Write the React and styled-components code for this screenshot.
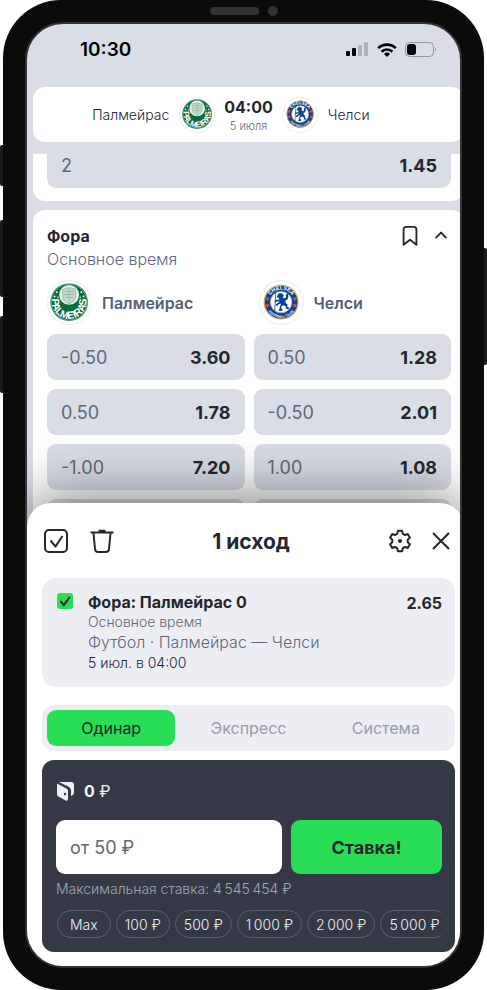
import React, { useId, useState } from "react";
import styled, { createGlobalStyle } from "styled-components";

const c = {
  bg: "#d9dde6",
  text: "#23272f",
  muted: "#5f687c",
  soft: "#949cb0",
  panel: "#edeef3",
  dark: "#343945",
  green: "#29dd55",
};

const GlobalStyle = createGlobalStyle`
  *, *::before, *::after { box-sizing: border-box; }
  body { margin: 0; background: #fff; font-family: Inter, "Noto Sans", sans-serif; color: ${c.text}; }
  button, input { font: inherit; color: inherit; }
  h1, h2, p { margin: 0; }
`;

const Device = styled.div`
  display: grid;
  grid-template-columns: 3px minmax(0, 1fr) 3px;
  min-height: 100vh;
`;

const Rail = styled.div`
  display: flex;
  flex-direction: column;
  padding-top: ${(p) => p.$top}px;
`;

const SideKey = styled.span`
  height: ${(p) => p.$height}px;
  margin-bottom: ${(p) => p.$after || 0}px;
  background: #1b1b1b;
  border-radius: ${(p) => (p.$right ? "0 2px 2px 0" : "2px 0 0 2px")};
`;

const Body = styled.div`
  display: flex;
  flex-direction: column;
  padding: 0 22px 22px;
  background: #0b0b0b;
  border-radius: 58px;
`;

const Notch = styled.div`
  display: flex;
  align-items: center;
  justify-content: center;
  gap: 9px;
  height: 22px;
`;

const Speaker = styled.span`
  width: 49px;
  height: 8px;
  border-radius: 4px;
  background: #333;
`;

const Camera = styled.span`
  width: 10px;
  height: 10px;
  border-radius: 50%;
  background: #333;
`;

const Screen = styled.main`
  display: flex;
  flex: 1;
  flex-direction: column;
  overflow: hidden;
  border: 2px solid #333;
  border-radius: 38px;
  background: ${c.bg};
`;

const StatusBar = styled.div`
  display: flex;
  align-items: center;
  justify-content: space-between;
  height: 51px;
  margin-bottom: 12px;
  padding: 0 23px 0 53px;
`;

const Clock = styled.time`
  font-size: 19px;
  font-weight: 600;
  color: #000;
`;

const StatusIcons = styled.div`
  display: flex;
  align-items: center;
  gap: 8px;
`;

const Card = styled.section`
  flex: none;
  margin: 0 -4px 0 6px;
  padding: 15px 13px 14px 14px;
  border-radius: 12px;
  background: #fff;
`;

const MatchCard = styled(Card)`
  display: grid;
  grid-template-columns: 1fr auto 1fr;
  align-items: center;
  height: 55px;
  padding: 0;
  font-size: 14px;
  font-weight: 300;
`;

const Home = styled.div`
  display: flex;
  align-items: center;
  justify-content: flex-end;
  gap: 10px;
`;

const Away = styled(Home)`
  justify-content: flex-start;
`;

const Kickoff = styled.div`
  display: flex;
  flex-direction: column;
  align-items: center;
  margin: 0 9px;
`;

const KickoffTime = styled.strong`
  font-size: 16px;
  font-weight: 700;
  line-height: 22px;
`;

const KickoffDate = styled.span`
  font-size: 11px;
  line-height: 16px;
  color: ${c.muted};
`;

const Badge = styled.span`
  display: flex;
  flex: none;
  align-items: center;
  justify-content: center;
  width: ${(p) => p.$size}px;
  height: ${(p) => p.$size}px;
  border: 1px solid #ececf0;
  border-radius: 50%;
  background: #fff;

  svg { width: 89%; height: 89%; }
`;

const List = styled.div`
  display: flex;
  flex: 1 1 300px;
  flex-direction: column;
  gap: 9px;
  min-height: 0;
  margin-top: 12px;
  overflow: hidden;
`;

const PartialCard = styled(Card)`
  margin-top: -12px;
  padding-top: 0;
  padding-bottom: 13px;
`;

const Odd = styled.button`
  display: flex;
  align-items: center;
  justify-content: space-between;
  width: 100%;
  height: 46px;
  padding: 0 14px;
  border: 0;
  border-radius: 9px;
  background: ${c.bg};
  color: ${c.muted};
  font-size: 18px;
  cursor: pointer;

  strong { font-weight: 700; color: ${c.text}; }
`;

const PendingOdd = styled.div`
  height: 46px;
  border-radius: 9px;
  background: ${c.bg};
`;

const MarketHead = styled.header`
  display: flex;
  align-items: flex-start;
  justify-content: space-between;
`;

const MarketTitle = styled.h2`
  font-size: 16px;
  font-weight: 700;
  line-height: 23px;
`;

const MarketNote = styled.p`
  font-size: 16px;
  font-weight: 300;
  line-height: 23px;
  color: ${c.muted};
`;

const Actions = styled.div`
  display: flex;
  align-items: center;
  gap: ${(p) => p.$gap}px;
`;

const IconButton = styled.button`
  display: flex;
  align-items: center;
  justify-content: center;
  width: ${(p) => p.$size}px;
  height: ${(p) => p.$size}px;
  padding: 0;
  border: 0;
  background: none;
  cursor: pointer;

  svg { display: block; flex: none; }
`;

const OddsGrid = styled.div`
  display: grid;
  grid-template-columns: 1fr 1fr;
  gap: 9px;
  margin-top: 9px;
`;

const Team = styled.div`
  display: flex;
  align-items: center;
  gap: 10px;
  font-size: 16px;
  font-weight: 600;
  color: #556074;
  padding-left: ${(p) => p.$inset || 0}px;
`;

const Sheet = styled.section`
  position: relative;
  display: flex;
  flex: none;
  flex-direction: column;
  margin: -24px -4px 0 0;
  padding: 0 9px 14px 15px;
  border-radius: 24px 24px 0 0;
  background: #fff;
  box-shadow: 0 0 64px rgba(0, 0, 0, 0.6);
`;

const SheetHead = styled.header`
  display: grid;
  grid-template-columns: auto 1fr auto;
  align-items: center;
  height: 75px;
  padding-top: 1px;
`;

const SheetTitle = styled.h1`
  font-size: 21px;
  font-weight: 700;
  text-align: center;
`;

const Bet = styled.article`
  display: grid;
  grid-template-columns: 16px 1fr auto;
  column-gap: 15px;
  padding: 14px 13px 14px 15px;
  border-radius: 14px;
  background: ${c.panel};
`;

const Tick = styled.input`
  appearance: none;
  width: 16px;
  height: 16px;
  margin: 1px 0 0;
  border-radius: 3px;
  background: #fff;
  cursor: pointer;

  &:checked {
    background: ${c.green} url("data:image/svg+xml,%3Csvg xmlns='http://www.w3.org/2000/svg' viewBox='0 0 16 16'%3E%3Cpath d='M3.5 8.2l3.3 4L12.8 4' fill='none' stroke='%2323272f' stroke-width='2'/%3E%3C/svg%3E") center / contain;
  }
`;

const BetText = styled.label`
  display: flex;
  flex-direction: column;
`;

const BetTitle = styled.strong`
  font-size: 16px;
  font-weight: 700;
  line-height: 20px;
`;

const BetLine = styled.span`
  font-size: ${(p) => p.$size}px;
  font-weight: 300;
  line-height: ${(p) => (p.$size === 16 ? 21 : 20)}px;
  color: ${(p) => (p.$dark ? c.text : c.muted)};
`;

const BetOdd = styled.strong`
  font-size: 16px;
  font-weight: 700;
  line-height: 22px;
`;

const Tabs = styled.div`
  display: grid;
  grid-template-columns: repeat(3, 1fr);
  gap: 9px;
  margin-top: 18px;
  padding: 5px;
  border-radius: 12px;
  background: ${c.panel};
`;

const Tab = styled.button`
  height: 36px;
  padding: 0;
  border: 0;
  border-radius: 9px;
  background: ${(p) => (p.$active ? c.green : "transparent")};
  color: ${(p) => (p.$active ? c.text : c.soft)};
  font-size: 16px;
  cursor: pointer;
`;

const Stake = styled.form`
  display: flex;
  flex-direction: column;
  margin-top: 9px;
  padding: 14px 13px 14px 14px;
  border-radius: 12px;
  background: ${c.dark};
`;

const Balance = styled.div`
  display: flex;
  align-items: center;
  gap: 10px;
  height: 34px;
  margin-bottom: 12px;
  font-size: 16px;
  color: #f0f1f5;
`;

const StakeRow = styled.div`
  display: grid;
  grid-template-columns: 3fr 2fr;
  gap: 9px;
`;

const Amount = styled.input`
  width: 100%;
  min-width: 0;
  height: 54px;
  padding: 0 14px;
  border: 0;
  border-radius: 9px;
  background: #fff;
  font-size: 18px;

  &::placeholder { color: ${c.muted}; opacity: 1; }
`;

const Submit = styled.button`
  height: 54px;
  padding: 0;
  border: 0;
  border-radius: 9px;
  background: ${c.green};
  font-size: 18px;
  font-weight: 700;
  cursor: pointer;
`;

const Limit = styled.p`
  margin-top: 4px;
  font-size: 14px;
  font-weight: 300;
  line-height: 22px;
  color: #a0a7b9;
`;

const Chips = styled.div`
  display: flex;
  gap: 5px;
  margin-top: 10px;
  padding-left: 1px;
  overflow: hidden;
`;

const Chip = styled.button`
  flex: none;
  height: 28px;
  padding: 0 ${(p) => (p.$wide ? 12 : 8)}px;
  border: 1px solid #555d72;
  border-radius: 14px;
  background: none;
  color: #f0f1f5;
  font-size: 14px;
  font-weight: 300;
  white-space: nowrap;
  cursor: pointer;
`;

function PalmeirasCrest() {
  const id = useId();
  return (
    <svg viewBox="0 0 100 100" aria-hidden="true">
      <circle cx="50" cy="50" r="49" fill="#0b6b41" />
      <circle cx="50" cy="50" r="47" fill="none" stroke="#fff" strokeWidth="1" />
      <circle cx="50" cy="31" r="26" fill="#e4efe8" />
      <path d="M33 17q17-9 34 0v16q0 14-17 22-17-8-17-22z" fill="#c3dccd" stroke="#6fa98a" strokeWidth="1.5" />
      <path d="M38 22h24M37 30h26M39 38h22M50 16v36" stroke="#85b79b" strokeWidth="2" />
      <g fill="#fff">
        <circle cx="18" cy="24" r="2.4" /><circle cx="12" cy="35" r="2.4" /><circle cx="21" cy="37" r="2" />
        <circle cx="82" cy="24" r="2.4" /><circle cx="88" cy="35" r="2.4" /><circle cx="79" cy="37" r="2" />
      </g>
      <path id={id} d="M9 30A45 45 0 1 0 91 30" fill="none" />
      <text fill="#fff" fontFamily="Liberation Sans" fontWeight="700" fontSize="27" textAnchor="middle">
        <textPath href={`#${id}`} startOffset="50%">PALMEIRAS</textPath>
      </text>
    </svg>
  );
}

function ChelseaCrest() {
  const top = useId();
  const bottom = useId();
  return (
    <svg viewBox="0 0 100 100" aria-hidden="true">
      <circle cx="50" cy="50" r="44" fill="#0a4595" stroke="#c9a860" strokeWidth="3" />
      <circle cx="50" cy="50" r="28" fill="#fff" stroke="#c9a860" strokeWidth="2" />
      <path id={top} d="M17 50A33 33 0 0 1 83 50" fill="none" />
      <path id={bottom} d="M9 50A41 41 0 0 0 91 50" fill="none" />
      <g fill="#fff" fontFamily="Liberation Sans" fontWeight="700" textAnchor="middle">
        <text fontSize="14"><textPath href={`#${top}`} startOffset="50%">CHELSEA</textPath></text>
        <text fontSize="9"><textPath href={`#${bottom}`} startOffset="50%">FOOTBALL CLUB</textPath></text>
      </g>
      <g fill="#e5424d">
        <circle cx="14" cy="41" r="4.5" /><circle cx="14" cy="59" r="4.5" />
        <circle cx="86" cy="41" r="4.5" /><circle cx="86" cy="59" r="4.5" />
      </g>
      <path
        d="M42 29l5-3 7 2 3 5-3 4 5 3 4-2-1-6 4-5 5 1-3 4 1 5-3 7-5 2 1 6 5 4-1 6 5 3-1 3h-8l1-6-7-4-5 2-1 6 4 4-2 3h-8l1-4 2-8 3-7-6 1-4 5-5-2 5-6 7-3-7-1-5 3-3-4 6-3 7 0-2-6-5-1z"
        fill="#0a4595"
      />
      <path d="M36 26l-3 48" stroke="#0a4595" strokeWidth="2" />
    </svg>
  );
}

function Gear() {
  const pt = (r, deg) => {
    const a = (deg * Math.PI) / 180;
    return `${(12 + r * Math.sin(a)).toFixed(2)} ${(12 - r * Math.cos(a)).toFixed(2)}`;
  };
  const teeth = [0, 60, 120, 180, 240, 300].map(
    (a) => `${pt(7.8, a - 20)}L${pt(10.4, a - 12)}L${pt(10.4, a + 12)}L${pt(7.8, a + 20)}`
  );
  return (
    <svg width="24" height="24" viewBox="0 0 24 24" aria-hidden="true">
      <path d={`M${teeth.join("L")}Z`} fill="none" stroke="currentColor" strokeWidth="2" strokeLinejoin="round" />
      <circle cx="12" cy="12" r="2" fill="currentColor" />
    </svg>
  );
}

const Line = ({ size = 24, width = 2, d, children }) => (
  <svg width={size} height={size} viewBox="0 0 24 24" fill="none" stroke="currentColor" strokeWidth={width} strokeLinejoin="round" aria-hidden="true">
    <path d={d} />
    {children}
  </svg>
);

const odds = [
  ["-0.50", "3.60"], ["0.50", "1.28"],
  ["0.50", "1.78"], ["-0.50", "2.01"],
  ["-1.00", "7.20"], ["1.00", "1.08"],
];
const modes = ["Одинар", "Экспресс", "Система"];
const stakes = ["Max", "100 ₽", "500 ₽", "1\u2009000 ₽", "2\u2009000 ₽", "5\u2009000 ₽"];

export default function App() {
  const [mode, setMode] = useState(modes[0]);
  const [amount, setAmount] = useState("");
  const [picked, setPicked] = useState(true);

  return (
    <>
      <GlobalStyle />
      <Device>
        <Rail $top={145}>
          <SideKey $height={41} $after={34} />
          <SideKey $height={77} $after={19} />
          <SideKey $height={77} />
        </Rail>
        <Body>
          <Notch><Speaker /><Camera /></Notch>
          <Screen>
            <StatusBar>
              <Clock>10:30</Clock>
              <StatusIcons>
                <svg width="23" height="15" viewBox="0 0 23 15" aria-hidden="true">
                  <rect x="0" y="9" width="4" height="5" rx="1" />
                  <rect x="6" y="6" width="4" height="8" rx="1" />
                  <rect x="12" y="3" width="4" height="11" rx="1" fill="#adb1b9" />
                  <rect x="18" y="0" width="4" height="14" rx="1" fill="#adb1b9" />
                </svg>
                <svg width="20" height="14" viewBox="0 0 20 14" fill="none" stroke="#000" strokeWidth="2.6" aria-hidden="true">
                  <path d="M1.2 5.2a12.5 12.5 0 0 1 17.6 0M4.6 8.7a7.7 7.7 0 0 1 10.8 0" />
                  <path d="M10 14l-3-3a4.3 4.3 0 0 1 6 0z" fill="#000" stroke="none" />
                </svg>
                <svg width="32" height="15" viewBox="0 0 32 15" aria-hidden="true">
                  <rect x="0.5" y="0.5" width="28" height="14" rx="4" fill="none" stroke="#9296a0" />
                  <rect x="2" y="2" width="9" height="11" rx="3" />
                  <path d="M30 5q1.6 2.500 0 5z" fill="#8b8f98" />
                </svg>
              </StatusIcons>
            </StatusBar>

            <MatchCard>
              <Home>Палмейрас<Badge $size={36}><PalmeirasCrest /></Badge></Home>
              <Kickoff>
                <KickoffTime>04:00</KickoffTime>
                <KickoffDate>5 июля</KickoffDate>
              </Kickoff>
              <Away><Badge $size={36}><ChelseaCrest /></Badge>Челси</Away>
            </MatchCard>

            <List>
              <PartialCard>
                <Odd type="button"><span>2</span><strong>1.45</strong></Odd>
              </PartialCard>
              <Card>
                <MarketHead>
                  <div>
                    <MarketTitle>Фора</MarketTitle>
                    <MarketNote>Основное время</MarketNote>
                  </div>
                  <Actions $gap={10}>
                    <IconButton $size={22} aria-label="В закладки">
                      <Line size={22} d="M5 21.500V5a3 3 0 0 1 3-3h8a3 3 0 0 1 3 3v16.500L12 16z" />
                    </IconButton>
                    <IconButton $size={20} aria-label="Свернуть">
                      <Line size={20} width={2.4} d="M5.500 14.500L12 8l6.500 6.500" />
                    </IconButton>
                  </Actions>
                </MarketHead>
                <OddsGrid>
                  <Team><Badge $size={45}><PalmeirasCrest /></Badge>Палмейрас</Team>
                  <Team $inset={5}><Badge $size={45}><ChelseaCrest /></Badge>Челси</Team>
                  {odds.map(([label, value], i) => (
                    <Odd key={i} type="button"><span>{label}</span><strong>{value}</strong></Odd>
                  ))}
                  <PendingOdd />
                  <PendingOdd />
                </OddsGrid>
              </Card>
            </List>

            <Sheet>
              <SheetHead>
                <Actions $gap={18}>
                  <IconButton $size={28} aria-label="Выбрать все">
                    <Line d="M5 1h14a4 4 0 0 1 4 4v14a4 4 0 0 1-4 4H5a4 4 0 0 1-4-4V5a4 4 0 0 1 4-4z">
                      <path d="M6.500 11.500l5 6L18.500 7" />
                    </Line>
                  </IconButton>
                  <IconButton $size={28} aria-label="Удалить">
                    <Line d="M0.500 3.500h23M3.500 4l1.500 16a3.300 3.300 0 0 0 3.200 3h7.600a3.300 3.300 0 0 0 3.200-3l1.500-16M8.500 1.800h7" />
                  </IconButton>
                </Actions>
                <SheetTitle>1 исход</SheetTitle>
                <Actions $gap={13}>
                  <IconButton $size={28} aria-label="Настройки"><Gear /></IconButton>
                  <IconButton $size={28} aria-label="Закрыть">
                    <Line d="M4 4l16 16M20 4L4 20" />
                  </IconButton>
                </Actions>
              </SheetHead>

              <Bet>
                <Tick id="bet" type="checkbox" checked={picked} onChange={(e) => setPicked(e.target.checked)} />
                <BetText htmlFor="bet">
                  <BetTitle>Фора: Палмейрас 0</BetTitle>
                  <BetLine $size={14}>Основное время</BetLine>
                  <BetLine $size={16}>Футбол · Палмейрас — Челси</BetLine>
                  <BetLine $size={14} $dark>5 июл. в 04:00</BetLine>
                </BetText>
                <BetOdd>2.65</BetOdd>
              </Bet>

              <Tabs role="tablist">
                {modes.map((m) => (
                  <Tab key={m} type="button" role="tab" aria-selected={m === mode} $active={m === mode} onClick={() => setMode(m)}>
                    {m}
                  </Tab>
                ))}
              </Tabs>

              <Stake onSubmit={(e) => e.preventDefault()}>
                <Balance>
                  <svg width="18" height="20" viewBox="0 0 18 20" aria-hidden="true">
                    <path d="M1 2.500l9.500 5q1.500.8 1.500 2.500v8q0 2.500-2.500 1.500L2.500 15.500Q1 15 1 13z" fill="#edeef3" />
                    <path d="M3 1H15q3 0 3 3v8q0 2-3 3V9.500q0-2.500-2-3.500z" fill="#edeef3" />
                    <circle cx="9" cy="13" r="1.200" fill="#343945" />
                  </svg>
                  <span><strong>0</strong> ₽</span>
                </Balance>
                <StakeRow>
                  <Amount aria-label="Сумма ставки" inputMode="numeric" placeholder="от 50 ₽" value={amount} onChange={(e) => setAmount(e.target.value)} />
                  <Submit type="submit">Ставка!</Submit>
                </StakeRow>
                <Limit>Максимальная ставка: 4{"\u2009"}545{"\u2009"}454 ₽</Limit>
                <Chips>
                  {stakes.map((s, i) => (
                    <Chip key={s} type="button" $wide={i === 0} onClick={() => setAmount(s)}>{s}</Chip>
                  ))}
                </Chips>
              </Stake>
            </Sheet>
          </Screen>
        </Body>
        <Rail $top={248}>
          <SideKey $height={117} $right />
        </Rail>
      </Device>
    </>
  );
}
